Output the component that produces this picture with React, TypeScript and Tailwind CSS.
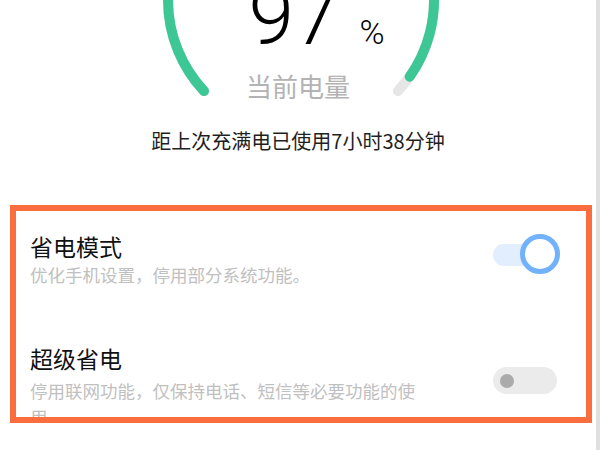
const cjk = "font-['Noto_Sans_CJK_SC','Noto_Sans',sans-serif]";

// point on the gauge ring, centre (301, 0), radius 133
function pt(deg: number) {
  const r = (deg * Math.PI) / 180;
  return `${(301 + 133 * Math.cos(r)).toFixed(1)} ${(133 * Math.sin(r)).toFixed(1)}`;
}

function Gauge() {
  const start = 136.8;
  const end = 43.2;
  const greenEnd = 35.2;
  return (
    <svg className="absolute left-0 top-0" width="600" height="110" viewBox="0 0 600 110">
      <path d={`M ${pt(start)} A 133 133 0 1 1 ${pt(end)}`} fill="none" stroke="#e6e6e6" strokeWidth="10" strokeLinecap="round" />
      <path d={`M ${pt(start)} A 133 133 0 1 1 ${pt(greenEnd)}`} fill="none" stroke="#3cc795" strokeWidth="10" strokeLinecap="round" />
    </svg>
  );
}

function ToggleOn() {
  return (
    <div className="relative h-[40px] w-[67px]">
      <div className="absolute left-0 top-[10px] h-[22px] w-[52px] rounded-full bg-[#e2eefd]" />
      <div className="absolute right-0 top-0 h-[40px] w-[40px] rounded-full border-[5px] border-[#72b1fb] bg-white" />
    </div>
  );
}

function ToggleOff() {
  return (
    <div className="flex h-[27px] w-[64px] items-center rounded-full bg-[#ebebeb] pl-[7px]">
      <div className="h-[14px] w-[14px] rounded-full bg-[#ababab]" />
    </div>
  );
}

export default function App() {
  return (
    <div className={`flex h-[450px] w-[600px] overflow-hidden bg-white ${cjk}`}>
      <div className="w-[596px]">
        <div className="relative flex flex-col items-center">
          <Gauge />
          <div className="relative -mt-[24px] ml-[37px] flex items-baseline font-['Roboto',sans-serif]">
            <span className="text-[82px] font-light leading-[80px] text-black">97</span>
            <span className="ml-[20px] text-[34px] font-light leading-none text-black">%</span>
          </div>
          <div className="relative mt-[14px] text-[26px] leading-[32px] text-[#b3b3b3]">当前电量</div>
          <div className="relative mt-[25px] text-[20px] leading-[28px] text-[#1f1f1f]">距上次充满电已使用7小时38分钟</div>
        </div>

        <div className="ml-[10px] mt-[50px] box-border h-[218px] w-[582px] overflow-hidden border-[6px] border-[#fa6d3e] pl-[14px] pr-[26px] pt-[20px]">
          <div className="flex items-start justify-between">
            <div className="w-[395px]">
              <div className="text-[23px] leading-[30px] text-[#111]">省电模式</div>
              <div className="mt-[1px] text-[17.5px] leading-[26px] text-[#c0c0c0]">优化手机设置，停用部分系统功能。</div>
            </div>
            <div className="mt-[3px]">
              <ToggleOn />
            </div>
          </div>

          <div className="mt-[55px] flex items-start justify-between">
            <div className="w-[395px]">
              <div className="text-[23px] leading-[30px] text-[#111]">超级省电</div>
              <div className="mt-[5px] text-[17.5px] leading-[26px] text-[#c0c0c0]">停用联网功能，仅保持电话、短信等必要功能的使用。</div>
            </div>
            <div className="mt-[24px] w-[67px]">
              <ToggleOff />
            </div>
          </div>
        </div>
      </div>
      <div className="h-[450px] w-[4px] bg-[#e0e0e0]" />
    </div>
  );
}
